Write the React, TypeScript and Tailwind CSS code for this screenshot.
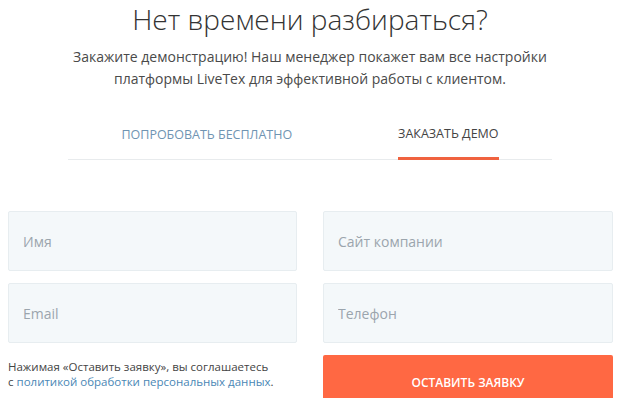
import React from "react";

const font = { fontFamily: '"Open Sans", "Noto Sans", sans-serif' };

function Field({ placeholder }: { placeholder: string }) {
  return (
    <input
      type="text"
      placeholder={placeholder}
      className="h-[60px] w-full rounded-[2px] border border-[#e7edf0] bg-[#f4f8fa] px-[14px] text-[14px] text-[#333] outline-none placeholder:text-[#9ba5ad]"
    />
  );
}

export default function App() {
  return (
    <div className="h-[398px] w-[620px] overflow-hidden bg-white" style={font}>
      {/* Заголовок */}
      <div className="flex flex-col items-center pt-[1px] text-center">
        <h1 className="text-[28px] leading-[36px] font-light text-[#333]">Нет времени разбираться?</h1>
        <p className="mt-[9px] text-[14px] leading-[22px] text-[#4a4a4a]">
          Закажите демонстрацию! Наш менеджер покажет вам все настройки
          <br />
          платформы LiveTex для эффективной работы с клиентом.
        </p>
      </div>

      {/* Табы */}
      <div className="mx-auto mt-[35px] flex w-[484px] justify-center gap-[106px] border-b border-[#e8ebed]">
        <button className="pb-[15px] text-[12.5px] leading-[18px] text-[#6f94b2] uppercase">
          Попробовать бесплатно
        </button>
        <div className="flex flex-col">
          <button className="pb-[14px] text-[12.5px] leading-[18px] text-[#444] uppercase">Заказать демо</button>
          <span className="-mb-[1px] h-[3px] w-full bg-[#f0623f]" />
        </div>
      </div>

      {/* Форма */}
      <div className="mt-[51px] grid grid-cols-[289px_290px] gap-x-[26px] gap-y-[12px] pl-[8px]">
        <Field placeholder="Имя" />
        <Field placeholder="Сайт компании" />
        <Field placeholder="Email" />
        <Field placeholder="Телефон" />
        <p className="pt-[4px] text-[11.5px] leading-[15px] text-[#444]">
          Нажимая «Оставить заявку», вы соглашаетесь
          <br />с <a className="text-[#4a87b5]">политикой обработки персональных данных</a>.
        </p>
        <button className="h-[56px] rounded-[2px] bg-[#ff6843] text-[12px] font-semibold text-white uppercase">
          Оставить заявку
        </button>
      </div>
    </div>
  );
}
